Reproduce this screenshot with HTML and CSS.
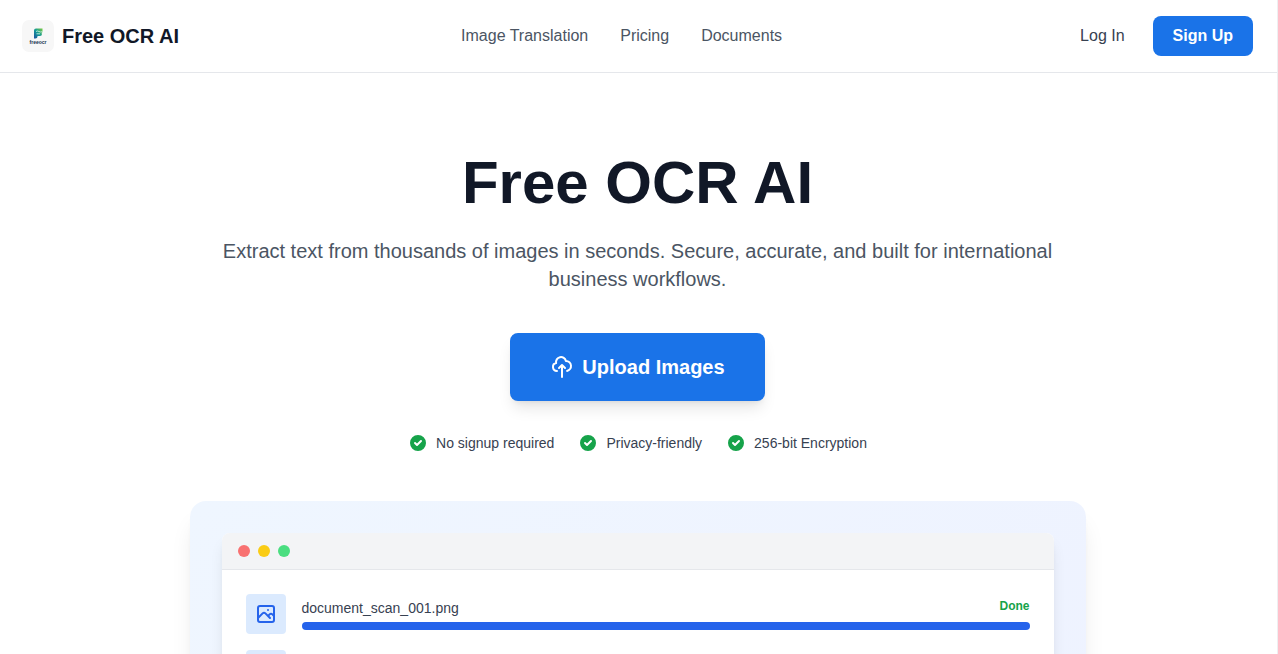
FILE: index.html
```html
<!DOCTYPE html>
<html lang="en">
<head>
  <meta charset="UTF-8" />
  <meta name="viewport" content="width=device-width, initial-scale=1.0"/>
  <title>Free OCR AI</title>
  <link rel="stylesheet" href="styles.css">
</head>
<body>
  <header class="header">
    <a class="brand" href="#">
      <svg class="logo" viewBox="0 0 32 32" aria-hidden="true">
        <defs>
          <linearGradient id="logo-fill" x1="0" y1="1" x2="1" y2="0">
            <stop offset="0" stop-color="#1c4fa0"/>
            <stop offset="0.5" stop-color="#149a96"/>
            <stop offset="1" stop-color="#7ccb3f"/>
          </linearGradient>
        </defs>
        <rect width="32" height="32" rx="7" fill="#f7f7f7"/>
        <path d="M12 18.500V10.500q0-2 2-2h6.500v3.500l-1 1 .5 1q0 2-2 2h-2.500v.5q0 2-2 2z" fill="url(#logo-fill)"/>
        <path d="M14 11.500q1.500-1 3 0t3.500 0M14.500 13.800h3.500" fill="none" stroke="#d8f5e4" stroke-width="0.800"/>
        <text class="logo-text" x="16" y="23.500">freeocr</text>
      </svg>
      <span>Free OCR AI</span>
    </a>

    <nav class="nav">
      <a href="#">Image Translation</a>
      <a href="#">Pricing</a>
      <a href="#">Documents</a>
    </nav>

    <div class="account">
      <button class="login" type="button">Log In</button>
      <button class="signup" type="button">Sign Up</button>
    </div>
  </header>

  <main class="hero">
    <h1>Free OCR AI</h1>
    <p class="tagline">Extract text from thousands of images in seconds. Secure, accurate, and built for international business workflows.</p>

    <button class="upload" type="button">
      <svg class="icon" viewBox="0 0 24 24" aria-hidden="true">
        <path d="M7 16a4 4 0 01-.88-7.903A5 5 0 1115.900 6L16 6a5 5 0 011 9.900M15 13l-3-3m0 0l-3 3m3-3v12"/>
      </svg>
      Upload Images
    </button>

    <ul class="perks">
      <li>
        <svg class="check" viewBox="0 0 20 20" aria-hidden="true"><path fill-rule="evenodd" d="M10 18a8 8 0 100-16 8 8 0 000 16zm3.707-9.293a1 1 0 00-1.414-1.414L9 10.586 7.707 9.293a1 1 0 00-1.414 1.414l2 2a1 1 0 001.414 0l4-4z"/></svg>
        No signup required
      </li>
      <li>
        <svg class="check" viewBox="0 0 20 20" aria-hidden="true"><path fill-rule="evenodd" d="M10 18a8 8 0 100-16 8 8 0 000 16zm3.707-9.293a1 1 0 00-1.414-1.414L9 10.586 7.707 9.293a1 1 0 00-1.414 1.414l2 2a1 1 0 001.414 0l4-4z"/></svg>
        Privacy-friendly
      </li>
      <li>
        <svg class="check" viewBox="0 0 20 20" aria-hidden="true"><path fill-rule="evenodd" d="M10 18a8 8 0 100-16 8 8 0 000 16zm3.707-9.293a1 1 0 00-1.414-1.414L9 10.586 7.707 9.293a1 1 0 00-1.414 1.414l2 2a1 1 0 001.414 0l4-4z"/></svg>
        256-bit Encryption
      </li>
    </ul>

    <section class="demo">
      <div class="window">
        <div class="window-bar">
          <span class="dot red"></span>
          <span class="dot yellow"></span>
          <span class="dot green"></span>
        </div>
        <div class="files">
          <div class="file">
            <div class="thumb">
              <svg class="icon" viewBox="0 0 24 24" aria-hidden="true">
                <path d="M4 16l4.586-4.586a2 2 0 012.828 0L16 16m-2-2l1.586-1.586a2 2 0 012.828 0L20 14m-6-6h.01M6 20h12a2 2 0 002-2V6a2 2 0 00-2-2H6a2 2 0 00-2 2v12a2 2 0 002 2z"/>
              </svg>
            </div>
            <div class="file-info">
              <div class="file-row">
                <span class="file-name">document_scan_001.png</span>
                <span class="file-status">Done</span>
              </div>
              <div class="progress"></div>
            </div>
          </div>
          <div class="file">
            <div class="thumb"></div>
          </div>
        </div>
      </div>
    </section>
  </main>
</body>
</html>
```

FILE: styles.css
```css
:root {
  --primary: #1a73e8;
  --heading: #111827;
  --text: #374151;
  --muted: #4b5563;
  --line: #e5e7eb;
  --success: #16a34a;
}

* {
  margin: 0;
  padding: 0;
  box-sizing: border-box;
}

body {
  height: 100vh;
  overflow: hidden;
  border-right: 1px solid #eeeff1;
  background: #fff;
  color: var(--text);
  font-family: "Liberation Sans", Arial, sans-serif;
  font-size: 16px;
  line-height: 24px;
}

a {
  color: inherit;
  text-decoration: none;
}

button {
  border: none;
  font: inherit;
  cursor: pointer;
}

.header {
  display: flex;
  align-items: center;
  justify-content: space-between;
  padding: 16px 24px 16px 22px;
  border-bottom: 1px solid var(--line);
}

.brand {
  display: flex;
  align-items: center;
  gap: 8px;
  color: var(--heading);
  font-size: 20px;
  font-weight: bold;
}

.logo {
  width: 32px;
  height: 32px;
}

.logo-text {
  fill: #16324f;
  font-size: 5px;
  font-weight: bold;
  text-anchor: middle;
}

.nav {
  display: flex;
  gap: 32px;
  color: var(--muted);
}

.account {
  display: flex;
  gap: 12px;
}

.login {
  padding: 8px 16px;
  background: none;
  color: var(--text);
}

.signup {
  padding: 8px 20px;
  border-radius: 8px;
  background: var(--primary);
  color: #fff;
  font-weight: bold;
}

.hero {
  display: flex;
  flex-direction: column;
  align-items: center;
  padding: 80px 24px 80px 22px;
  text-align: center;
}

.hero h1 {
  margin-bottom: 24px;
  color: var(--heading);
  font-size: 60px;
  line-height: 60px;
}

.tagline {
  max-width: 896px;
  margin-bottom: 40px;
  color: var(--muted);
  font-size: 20px;
  line-height: 28px;
}

.upload {
  display: flex;
  align-items: center;
  gap: 8px;
  margin-bottom: 32px;
  padding: 20px 40px;
  border-radius: 8px;
  background: var(--primary);
  box-shadow: 0 10px 15px -3px rgba(0, 0, 0, 0.1), 0 4px 6px -4px rgba(0, 0, 0, 0.1);
  color: #fff;
  font-size: 20px;
  font-weight: bold;
  line-height: 28px;
}

.icon {
  width: 24px;
  height: 24px;
  fill: none;
  stroke: currentColor;
  stroke-width: 2;
  stroke-linecap: round;
  stroke-linejoin: round;
}

.perks {
  display: flex;
  flex-wrap: wrap;
  justify-content: center;
  gap: 24px;
  margin-bottom: 48px;
  font-size: 14px;
  line-height: 20px;
  list-style: none;
}

.perks li {
  display: flex;
  align-items: center;
  gap: 8px;
}

.check {
  width: 20px;
  height: 20px;
  fill: var(--success);
}

.demo {
  width: 100%;
  max-width: 896px;
  padding: 32px;
  border-radius: 16px;
  background: linear-gradient(135deg, #eff6ff, #eef2ff);
  box-shadow: 0 20px 25px -5px rgba(0, 0, 0, 0.1), 0 8px 10px -6px rgba(0, 0, 0, 0.1);
  text-align: left;
}

.window {
  overflow: hidden;
  min-height: 320px;
  border-radius: 8px;
  background: #fff;
  box-shadow: 0 10px 15px -3px rgba(0, 0, 0, 0.1), 0 4px 6px -4px rgba(0, 0, 0, 0.1);
}

.window-bar {
  display: flex;
  gap: 8px;
  padding: 12px 16px;
  border-bottom: 1px solid var(--line);
  background: #f3f4f6;
}

.dot {
  width: 12px;
  height: 12px;
  border-radius: 50%;
}

.red {
  background: #f87171;
}

.yellow {
  background: #facc15;
}

.green {
  background: #4ade80;
}

.files {
  display: flex;
  flex-direction: column;
  gap: 16px;
  padding: 24px;
}

.file {
  display: flex;
  align-items: center;
  gap: 16px;
}

.thumb {
  display: flex;
  align-items: center;
  justify-content: center;
  width: 40px;
  height: 40px;
  border-radius: 4px;
  background: #dbeafe;
  color: #2563eb;
}

.file-info {
  flex: 1;
}

.file-row {
  display: flex;
  align-items: flex-start;
  justify-content: space-between;
  margin-bottom: 4px;
}

.file-name {
  font-size: 14px;
  line-height: 20px;
}

.file-status {
  color: var(--success);
  font-size: 12px;
  font-weight: bold;
  line-height: 16px;
}

.progress {
  height: 8px;
  border-radius: 4px;
  background: #2563eb;
}

@media (max-width: 768px) {
  .nav {
    display: none;
  }

  .hero h1 {
    font-size: 40px;
  }
}
```
